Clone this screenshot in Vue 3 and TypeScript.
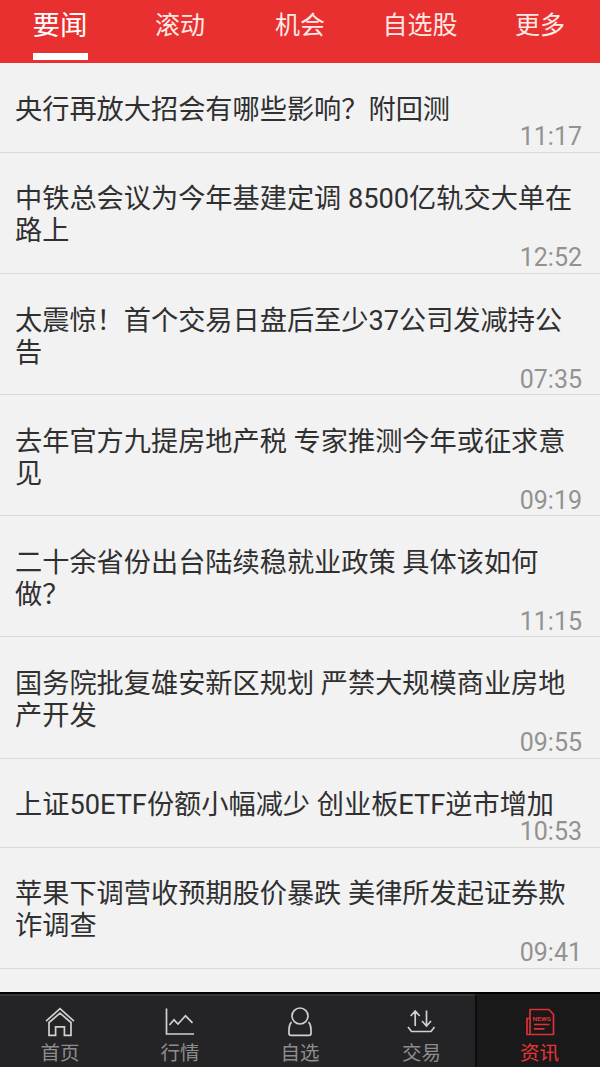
<script setup lang="ts">
interface Article {
  title: string
  time: string
}

const tabs: string[] = ['要闻', '滚动', '机会', '自选股', '更多']

const articles: Article[] = [
  { title: '央行再放大招会有哪些影响？附回测', time: '11:17' },
  { title: '中铁总会议为今年基建定调 8500亿轨交大单在路上', time: '12:52' },
  { title: '太震惊！首个交易日盘后至少37公司发减持公告', time: '07:35' },
  { title: '去年官方九提房地产税 专家推测今年或征求意见', time: '09:19' },
  { title: '二十余省份出台陆续稳就业政策 具体该如何做？', time: '11:15' },
  { title: '国务院批复雄安新区规划 严禁大规模商业房地产开发', time: '09:55' },
  { title: '上证50ETF份额小幅减少 创业板ETF逆市增加', time: '10:53' },
  { title: '苹果下调营收预期股价暴跌 美律所发起证券欺诈调查', time: '09:41' },
]
</script>

<template>
  <div class="app">
    <nav class="tabs">
      <div v-for="(tab, i) in tabs" :key="tab" class="tab" :class="{ active: i === 0 }">
        <span class="tab-label">{{ tab }}</span>
      </div>
    </nav>

    <main class="list">
      <article v-for="item in articles" :key="item.title" class="row">
        <div class="title">{{ item.title }}</div>
        <time class="time">{{ item.time }}</time>
      </article>
    </main>

    <footer class="bar">
      <div class="item">
        <svg class="icon" viewBox="0 0 32 32">
          <path d="M2 15.2 16 2.6 30 15.2" />
          <path d="M5 16.5V29.4H11.6V20.8H20.4V29.4H27V16.5L16 7.2Z" />
        </svg>
        <span>首页</span>
      </div>
      <div class="item">
        <svg class="icon" viewBox="0 0 32 32">
          <path d="M2.5 2.5V28H30" />
          <path d="M5.5 19 10 13.8 14 18 21.5 9.8 28.5 16.8" />
        </svg>
        <span>行情</span>
      </div>
      <div class="item">
        <svg class="icon" viewBox="0 0 32 32">
          <circle cx="16" cy="10" r="8" />
          <path d="M7.5 16C5.5 18 5 20.5 5 23.5V27.5Q5 29.4 7 29.4H25Q27 29.4 27 27.5V23.5C27 20.5 26.5 18 24.5 16" />
        </svg>
        <span>自选</span>
      </div>
      <div class="item">
        <svg class="icon" viewBox="0 0 32 32">
          <path d="M9.200 20V5.500M4.700 10 9.200 5 13.700 10M20.500 4.500V19.500M16 15 20.500 20 25 15" />
          <path d="M2 21 5.500 25.500H25L28.500 21" />
        </svg>
        <span>交易</span>
      </div>
      <div class="item selected">
        <svg class="icon" viewBox="0 0 32 32">
          <path d="M6 28.500V3.500H25L29.500 8.500V28.500H3V12.500H6" />
          <path d="M10 18.500H25.500M10 22.800H20.500" />
          <text x="8.500" y="15" textLength="18.500" lengthAdjust="spacingAndGlyphs">NEWS</text>
        </svg>
        <span>资讯</span>
      </div>
    </footer>
  </div>
</template>

<style>
body {
  margin: 0;
}
</style>

<style scoped>
.app {
  width: 600px;
  height: 1067px;
  display: flex;
  flex-direction: column;
  overflow: hidden;
  background: #f2f2f2;
  font-family: Roboto, "Noto Sans CJK SC", sans-serif;
}

.tabs {
  flex: none;
  height: 63px;
  display: grid;
  grid-template-columns: repeat(5, 1fr);
  background: #e83030;
  color: #ffe9e6;
}

.tab {
  display: flex;
  justify-content: center;
}

.tab-label {
  height: 60px;
  box-sizing: border-box;
  padding-top: 6px;
  font-size: 25px;
  line-height: 40px;
}

.active .tab-label {
  border-bottom: 7px solid #fff;
  color: #fff;
  font-size: 27.500px;
}

.list {
  flex: 1;
  min-height: 0;
  padding-top: 0.500px;
}

.row {
  box-sizing: border-box;
  padding: 30.700px 15px 3.900px;
  border-bottom: 1px solid #d9d9d9;
}

.title {
  color: #303030;
  font-size: 27.200px;
  line-height: 32px;
}

.time {
  display: block;
  padding-right: 3px;
  color: #929292;
  font-size: 25px;
  line-height: 21.600px;
  text-align: right;
}

.bar {
  flex: none;
  height: 75px;
  box-sizing: border-box;
  display: grid;
  grid-template-columns: 120px 120px 120px 115px 125px;
  border-top: 2px solid #000;
  background: #242426;
  color: #8d8d8d;
}

.item {
  display: flex;
  flex-direction: column;
  align-items: center;
  box-sizing: border-box;
  padding-top: 10px;
  border-top: 2px solid #353537;
  font-size: 19.500px;
  line-height: 28px;
}

.item:nth-child(4) {
  padding-left: 8px;
}

.icon {
  flex: none;
  width: 32px;
  height: 32px;
  margin-bottom: 2px;
  fill: none;
  stroke: #d0d0d0;
  stroke-width: 1.700;
}

.selected {
  padding-left: 2px;
  border-top-color: #1b1d1d;
  border-left: 2px solid #0c0c0c;
  background: #19191a;
  color: #e83538;
}

.selected .icon {
  stroke: #df3034;
}

.selected text {
  fill: #df3034;
  stroke: none;
  font: bold 5px Roboto, sans-serif;
}
</style>
